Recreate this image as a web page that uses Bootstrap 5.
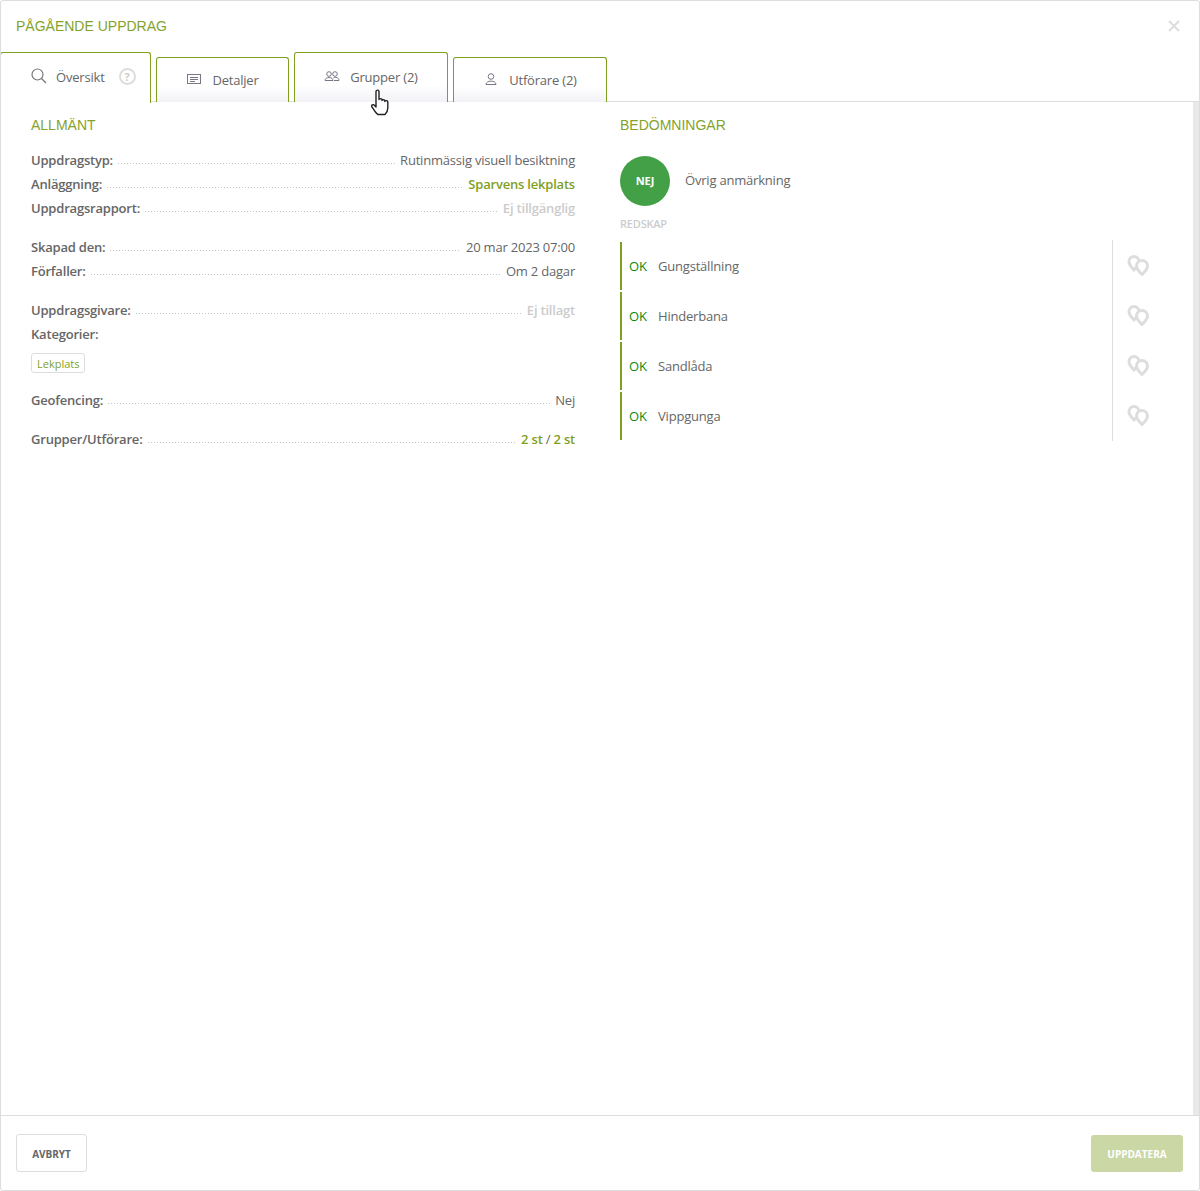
<!DOCTYPE html>
<html lang="sv">
<head>
    <meta charset="UTF-8">
    <meta name="viewport" content="width=device-width, initial-scale=1.0">
    <title>Pågående uppdrag</title>
    <link href="https://cdn.jsdelivr.net/npm/bootstrap@5.3.0/dist/css/bootstrap.min.css" rel="stylesheet">
    <style>
        body {
            background-color: #fff;
            color: #666;
            font-family: "Open Sans", "Noto Sans", sans-serif;
            font-size: 13px;
            letter-spacing: -.2px;
        }
        .dlg {
            height: 100vh;
            border: 1px solid #ddd;
            border-radius: 3px;
            position: relative;
            overflow: hidden;
        }
        .dlg-title {
            height: 51px;
            padding: 17px 15px 0;
            font-family: "Liberation Sans", sans-serif;
            font-size: 14px;
            line-height: 16px;
            letter-spacing: 0;
            color: #85a32b;
        }
        .dlg-close {
            position: absolute;
            top: 19px;
            right: 19px;
            line-height: 0;
        }
        .tab-strip {
            height: 50px;
            border-bottom: 1px solid #ddd;
            gap: 5px;
        }
        .tab-item {
            height: 45px;
            margin-top: 5px;
            padding-top: 13px;
            border: 1px solid #7f9f1f;
            border-bottom: 0;
            border-radius: 3px 3px 0 0;
            background: linear-gradient(to bottom, #fff 65%, #f2f2f7 100%);
            color: #666;
            justify-content: center;
            gap: 10px;
        }
        .tab-first {
            width: 151px;
            height: 51px;
            margin-left: -1px;
            margin-top: 0;
            margin-bottom: -1px;
            padding-top: 15px;
            padding-left: 30px;
            background: #fff;
            justify-content: flex-start;
            gap: 9px;
        }
        .tab-hover {
            height: 50px;
            margin-top: 0;
            padding-top: 15px;
        }
        .tab-detail { width: 133px; }
        .tab-wide { width: 154px; }
        .help-mark {
            width: 17px;
            height: 17px;
            margin-left: 5px;
            border: 2px solid #ddd;
            border-radius: 50%;
            color: #ccc;
            font-size: 11px;
            font-weight: 700;
            line-height: 13px;
            text-align: center;
        }
        .pane-wrap {
            flex: 1;
        }
        .pane {
            flex: 1;
            padding: 0 15px 0 30px;
            gap: 45px;
        }
        .pane-left {
            flex: none;
            width: 544px;
        }
        .pane-right {
            flex: 1;
        }
        .scroll-track {
            width: 6px;
            background-color: #e9e9e9;
        }
        .sect-title {
            font-family: "Liberation Sans", sans-serif;
            font-size: 14px;
            line-height: 16px;
            letter-spacing: 0;
            color: #85a32b;
            padding-top: 15px;
            margin-bottom: 15px;
        }
        .sect-title-wide {
            margin-bottom: 23px;
        }
        .info-group {
            margin-bottom: 15px;
        }
        .info-row {
            height: 24px;
            align-items: center;
            line-height: 24px;
        }
        .info-row b {
            font-weight: 600;
        }
        .dots {
            flex: 1;
            height: 1px;
            margin: 7px 5px 0;
            background-image: repeating-linear-gradient(to right, #c4c4c4 0, #c4c4c4 1px, transparent 1px, transparent 3px);
        }
        .val-link {
            color: #7f9f1f;
            font-weight: 600;
        }
        .val-off {
            color: #ccc;
            font-weight: 600;
        }
        .tag-item {
            display: block;
            width: fit-content;
            height: 20px;
            margin-top: 7px;
            padding: 0 5px;
            border: 1px solid #ddd;
            border-radius: 3px;
            color: #7f9f1f;
            font-size: 11px;
            line-height: 19px;
            letter-spacing: 0;
        }
        .nej-dot {
            width: 50px;
            height: 50px;
            margin-right: 15px;
            border-radius: 50%;
            background-color: #43a047;
            color: #fff;
            font-size: 11px;
            font-weight: 700;
            line-height: 50px;
            letter-spacing: 0;
            text-align: center;
        }
        .sub-head {
            margin-top: 11px;
            margin-bottom: 11px;
            font-size: 11px;
            line-height: 14px;
            color: #ccc;
            font-weight: 600;
        }
        .check-list {
            flex: none;
            width: 492px;
        }
        .check-item {
            height: 48px;
            margin-bottom: 2px;
            padding: 2px 0 0 7px;
            border-left: 2px solid #7f9f1f;
            align-items: center;
        }
        .check-ok {
            width: 29px;
            color: #0a8a0a;
            letter-spacing: 0;
        }
        .check-side {
            flex: none;
            width: 51px;
            height: 201px;
            margin-top: -2px;
            padding-left: 14px;
            border-left: 1px solid #ddd;
        }
        .check-pins {
            height: 50px;
        }
        .dlg-foot {
            height: 75px;
            padding: 0 16px 0 15px;
            border-top: 1px solid #ddd;
        }
        .btn-cancel {
            width: 71px;
            height: 38px;
            padding: 2px 0 0;
            border: 1px solid #ddd;
            border-radius: 3px;
            background: #fff;
            color: #666;
            font-size: 10px;
            font-weight: 700;
            letter-spacing: 0;
        }
        .btn-save {
            width: 92px;
            height: 37px;
            padding: 2px 0 0;
            border: 0;
            border-radius: 3px;
            background: #cbd7a5;
            color: #fff;
            font-size: 10px;
            font-weight: 700;
            letter-spacing: 0;
        }
        .hand-cursor {
            position: absolute;
            left: 369px;
            top: 88px;
        }
    </style>
</head>
<body>
    <div class="dlg d-flex flex-column">
        <div class="dlg-title">PÅGÅENDE UPPDRAG</div>
        <div class="dlg-close">
            <svg width="12" height="12" viewBox="0 0 12 12"><path d="M1 1l10 10M11 1L1 11" stroke="#ddd" stroke-width="2" fill="none"/></svg>
        </div>

        <div class="tab-strip d-flex">
            <div class="tab-item tab-first d-flex">
                <svg width="16" height="16" viewBox="0 0 16 16" fill="none" stroke="#777" stroke-width="1.2"><circle cx="6.500" cy="6.500" r="5.500"/><path d="M10.500 10.500l4.500 4.500"/></svg>
                <span>Översikt</span>
                <span class="help-mark">?</span>
            </div>
            <div class="tab-item tab-detail d-flex">
                <svg width="16" height="16" viewBox="0 0 16 16" fill="none" stroke="#778" stroke-width="1"><rect x="1.500" y="3.500" width="13" height="9"/><path d="M4 6.500h8M4 8.500h8M4 10.500h5"/></svg>
                <span>Detaljer</span>
            </div>
            <div class="tab-item tab-wide tab-hover d-flex">
                <svg width="16" height="16" viewBox="0 0 16 16" fill="none" stroke="#778" stroke-width="1"><circle cx="5" cy="6" r="2.300"/><circle cx="11" cy="6" r="2.300"/><path d="M1 12.500c0-4 8-4 8 0zM9.500 10c2-1.500 5.500-.5 5.500 2.500h-5"/></svg>
                <span>Grupper (2)</span>
            </div>
            <div class="tab-item tab-wide d-flex">
                <svg width="16" height="16" viewBox="0 0 16 16" fill="none" stroke="#778" stroke-width="1"><circle cx="8" cy="5.500" r="2.800"/><path d="M3 13.500c0-4.500 10-4.500 10 0z"/></svg>
                <span>Utförare (2)</span>
            </div>
        </div>

        <div class="pane-wrap d-flex">
            <div class="pane d-flex">
                <div class="pane-left">
                    <div class="sect-title">ALLMÄNT</div>
                    <div class="info-group">
                        <div class="info-row d-flex"><b>Uppdragstyp:</b><span class="dots"></span><span>Rutinmässig visuell besiktning</span></div>
                        <div class="info-row d-flex"><b>Anläggning:</b><span class="dots"></span><span class="val-link">Sparvens lekplats</span></div>
                        <div class="info-row d-flex"><b>Uppdragsrapport:</b><span class="dots"></span><span class="val-off">Ej tillgänglig</span></div>
                    </div>
                    <div class="info-group">
                        <div class="info-row d-flex"><b>Skapad den:</b><span class="dots"></span><span>20 mar 2023 07:00</span></div>
                        <div class="info-row d-flex"><b>Förfaller:</b><span class="dots"></span><span>Om 2 dagar</span></div>
                    </div>
                    <div class="info-group">
                        <div class="info-row d-flex"><b>Uppdragsgivare:</b><span class="dots"></span><span class="val-off">Ej tillagt</span></div>
                        <div class="info-row d-flex"><b>Kategorier:</b></div>
                        <span class="tag-item">Lekplats</span>
                    </div>
                    <div class="info-group">
                        <div class="info-row d-flex"><b>Geofencing:</b><span class="dots"></span><span>Nej</span></div>
                    </div>
                    <div class="info-group">
                        <div class="info-row d-flex"><b>Grupper/Utförare:</b><span class="dots"></span><span><span class="val-link">2 st</span> / <span class="val-link">2 st</span></span></div>
                    </div>
                </div>
                <div class="pane-right">
                    <div class="sect-title sect-title-wide">BEDÖMNINGAR</div>
                    <div class="d-flex align-items-center">
                        <div class="nej-dot">NEJ</div>
                        <span>Övrig anmärkning</span>
                    </div>
                    <div class="sub-head">REDSKAP</div>
                    <div class="d-flex">
                        <div class="check-list" id="checkList"></div>
                        <div class="check-side" id="checkSide"></div>
                    </div>
                </div>
            </div>
            <div class="scroll-track"></div>
        </div>

        <div class="dlg-foot d-flex justify-content-between align-items-center">
            <button class="btn-cancel" type="button">AVBRYT</button>
            <button class="btn-save" type="button">UPPDATERA</button>
        </div>

        <svg class="hand-cursor" width="20" height="27" viewBox="0 0 20 27">
            <path d="M6 2.500c0-1.800 3-1.800 3 0v8c0-1.200 3-1.200 3 0v1c0-1.200 2.800-1.200 2.800 0v1c0-1.200 3-1.200 3 .5v6c0 3-1.300 5-2.800 6.500H8c-2.200-1-3.800-4.500-6-7.500-1.200-1.700 1.200-3.300 2.300-1.700L6 18z" fill="#fff" stroke="#222" stroke-width="1.400" stroke-linejoin="round"/>
        </svg>
    </div>

    <script src="https://cdn.jsdelivr.net/npm/bootstrap@5.3.0/dist/js/bootstrap.bundle.min.js"></script>
    <script>
        const items = ['Gungställning', 'Hinderbana', 'Sandlåda', 'Vippgunga'];
        const pins = '<svg width="22" height="22" viewBox="0 0 22 22" fill="#fff" stroke="#ddd" stroke-width="3"><path d="M7 16C4 13 2 11 2 7.500a5 5 0 0 1 10 0C12 11 10 13 7 16z"/><path d="M15 20.500c-3-3-5.500-5-5.500-8.500a5.500 5.500 0 0 1 11 0c0 3.500-2.500 5.500-5.500 8.500z"/></svg>';
        document.getElementById('checkList').innerHTML = items.map(name =>
            `<div class="check-item d-flex"><span class="check-ok">OK</span><span>${name}</span></div>`).join('');
        document.getElementById('checkSide').innerHTML = items.map(() =>
            `<div class="check-pins d-flex align-items-center">${pins}</div>`).join('');
    </script>
</body>
</html>
